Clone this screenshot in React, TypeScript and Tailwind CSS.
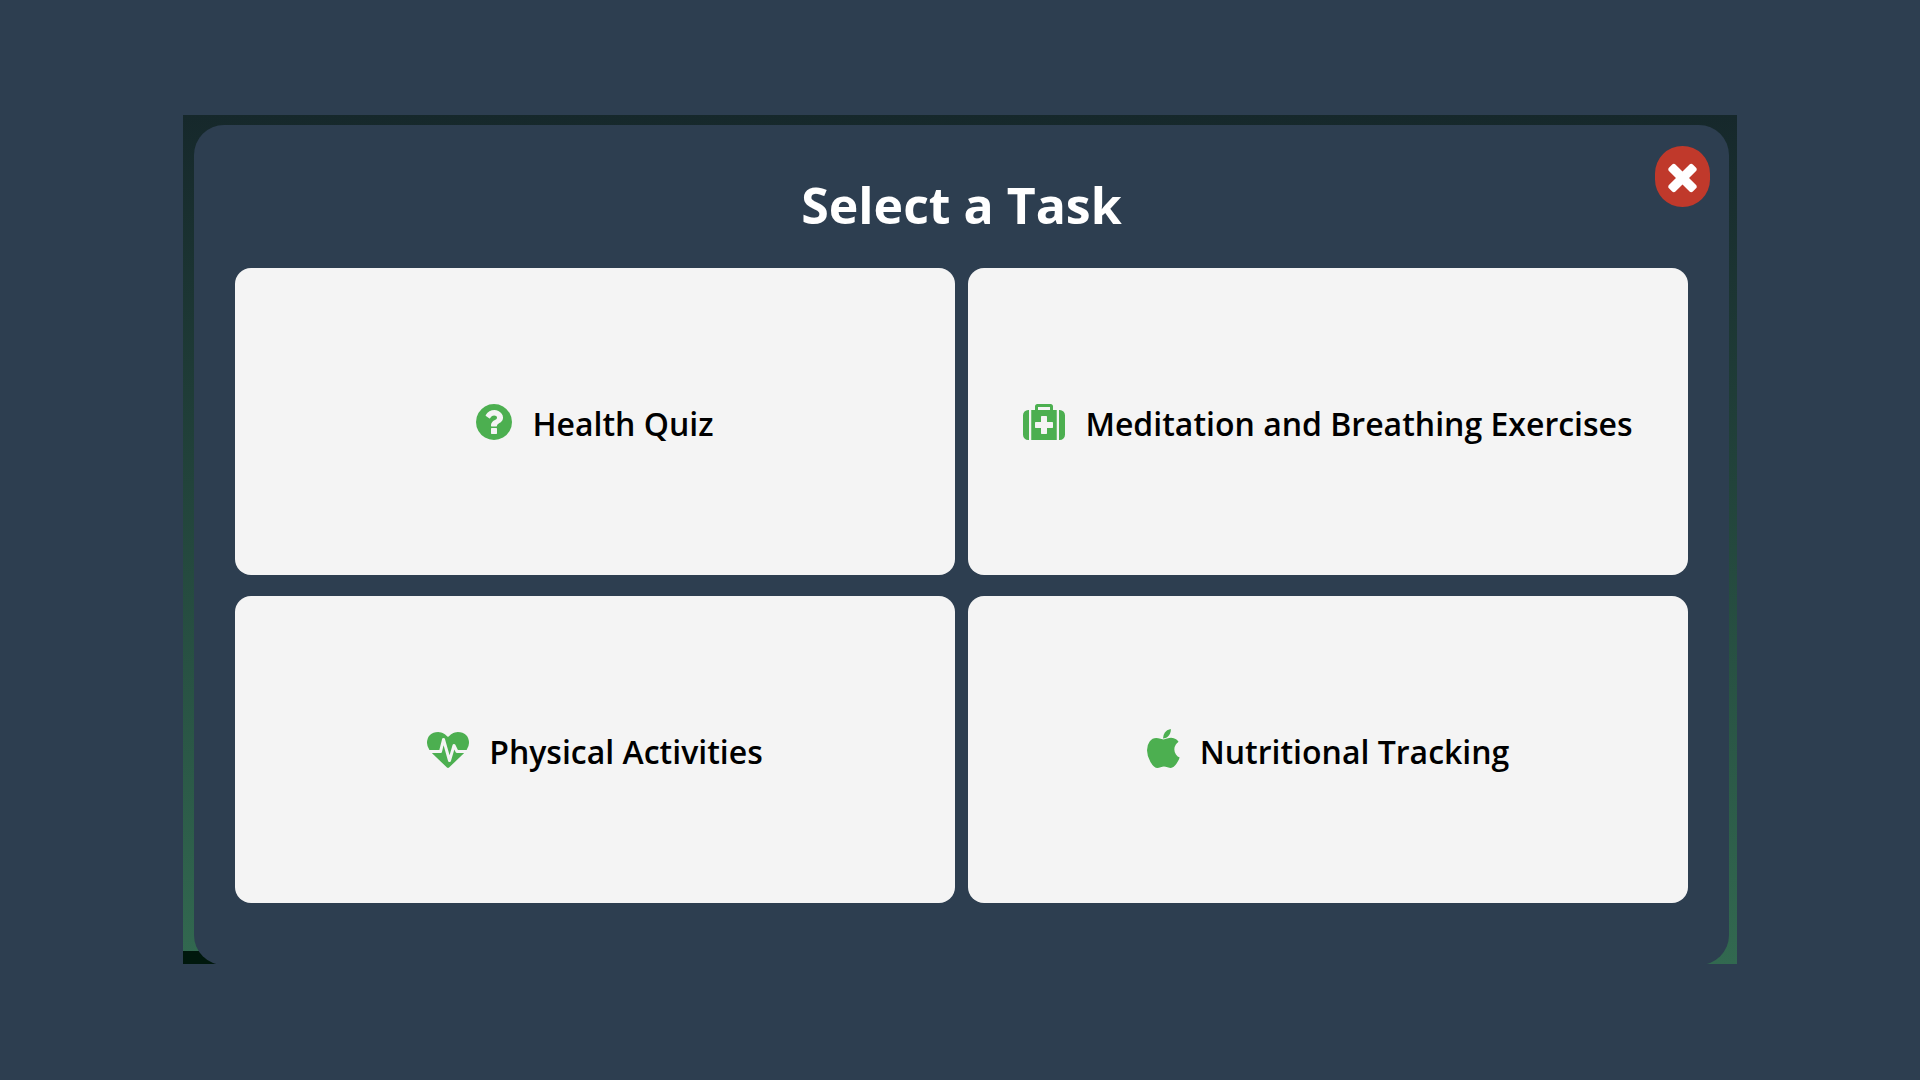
import type { ReactNode } from "react";

type IconProps = { viewBox: string; className: string; d: string };

function Icon({ viewBox, className, d }: IconProps) {
  return (
    <svg viewBox={viewBox} className={className} fill="currentColor" aria-hidden="true">
      <path d={d} />
    </svg>
  );
}

const QUESTION =
  "M1024 1376v-192q0-14-9-23t-23-9h-192q-14 0-23 9t-9 23v192q0 14 9 23t23 9h192q14 0 23-9t9-23zm256-672q0-88-55.5-163t-138.5-116-170-41q-243 0-371 213-15 24 8 42l132 100q7 6 19 6 16 0 25-12 53-68 86-92 34-24 86-24 48 0 85.5 26t37.5 59q0 38-20 61t-68 45q-63 28-115.5 86.5t-52.5 125.5v36q0 14 9 23t23 9h192q14 0 23-9t9-23q0-19 21.5-49.5t54.5-49.5q32-18 49-28.5t46-35 44.5-48 28-60.5 12.5-81zm384 192q0 209-103 385.5t-279.5 279.5-385.5 103-385.5-103-279.5-279.5-103-385.5 103-385.5 279.5-279.5 385.5-103 385.5 103 279.5 279.5 103 385.5z";
const MEDKIT =
  "M1280 1120v-192q0-14-9-23t-23-9h-224v-224q0-14-9-23t-23-9h-192q-14 0-23 9t-9 23v224h-224q-14 0-23 9t-9 23v192q0 14 9 23t23 9h224v224q0 14 9 23t23 9h192q14 0 23-9t9-23v-224h224q14 0 23-9t9-23zM640 384h512v-128h-512v128zM256 384v1280h-32q-92 0-158-66t-66-158v-832q0-92 66-158t158-66h32zM1440 384v1280h-1088v-1280h160v-160q0-40 28-68t68-28h576q40 0 68 28t28 68v160h160zM1792 608v832q0 92-66 158t-158 66h-32v-1280h32q92 0 158 66t66 158z";
const HEARTBEAT =
  "M1280 1024h305q-5 6-10 10.5t-9 7.5l-3 4-623 600q-18 18-44 18t-44-18l-624-602q-5-2-21-20h369q22 0 39.5-13.5t22.5-34.5l70-281 190 667q6 20 23 33t39 13q21 0 38-13t23-33l146-485 56 112q18 35 57 35zm512-428q0 145-103 300h-369l-111-221q-8-17-25.5-27t-36.5-8q-45 5-56 46l-129 430-196-686q-6-20-23.5-33t-39.5-13-39 13.5-22 34.5l-116 464h-423q-103-155-103-300 0-220 127-344t351-124q62 0 126.5 21.5t120 58 95.5 68.5 76 68q36-36 76-68t95.5-68.5 120-58 126.5-21.5q224 0 351 124t127 344z";
const APPLE =
  "M1585 1215q-39 125-123 250-129 196-257 196-49 0-140-32-86-32-151-32-61 0-142 33-81 34-132 34-152 0-301-259-147-261-147-503 0-228 113-374 113-144 284-144 72 0 177 30 104 30 138 30 45 0 143-34 102-34 173-34 119 0 213 65 52 36 104 100-79 67-114 118-65 94-65 207 0 124 69 223t158 126zm-376-1173q0 61-29 136-30 75-93 138-54 54-108 72-37 11-104 17 3-149 78-257 74-107 250-148 1 3 2.5 11t2.5 11q0 4 .5 10t.5 10z";
const TIMES =
  "M1490 1322q0 40-28 68l-136 136q-28 28-68 28t-68-28l-294-294-294 294q-28 28-68 28t-68-28l-136-136q-28-28-28-68t28-68l294-294-294-294q-28-28-28-68t28-68l136-136q28-28 68-28t68 28l294 294 294-294q28-28 68-28t68 28l136 136q28 28 28 68t-28 68l-294 294 294 294q28 28 28 68z";

const tasks: { label: string; icon: ReactNode }[] = [
  { label: "Health Quiz", icon: <Icon viewBox="128 0 1536 1792" className="h-[42px] w-9 shrink-0 text-[#4caf50]" d={QUESTION} /> },
  { label: "Meditation and Breathing Exercises", icon: <Icon viewBox="0 0 1792 1792" className="h-[42px] w-[42px] shrink-0 text-[#4caf50]" d={MEDKIT} /> },
  { label: "Physical Activities", icon: <Icon viewBox="0 0 1792 1792" className="h-[42px] w-[42px] shrink-0 text-[#4caf50]" d={HEARTBEAT} /> },
  { label: "Nutritional Tracking", icon: <Icon viewBox="192 0 1408 1792" className="h-[42px] w-[33px] shrink-0 text-[#4caf50]" d={APPLE} /> },
];

export default function App() {
  return (
    <main className="min-h-screen bg-[#2d3e50] px-[183px] py-[115px] font-['Open_Sans','Noto_Sans',sans-serif]">
      <div className="relative overflow-hidden bg-linear-to-b from-[#16282b] to-[#326950] pt-[10px] pr-2 pl-[11px]">
        <div className="absolute bottom-0 left-0 h-[13px] w-10 bg-[#00180d]" />
        <section className="relative -mb-px rounded-[30px] bg-[#2d3e50] px-[41px] pt-[48px] pb-[62px]">
          <button
            type="button"
            aria-label="Close"
            className="absolute top-[21px] right-[19px] flex h-[61px] w-[55px] items-center justify-center rounded-full bg-[#c0392b] text-white"
          >
            <Icon viewBox="0 0 1792 1792" className="h-[43px] w-[43px]" d={TIMES} />
          </button>
          <h1 className="mb-[31px] text-center text-[50px] leading-[64px] font-bold text-white">Select a Task</h1>
          <div className="grid grid-cols-2 gap-x-[13px] gap-y-[21px]">
            {tasks.map((task) => (
              <button
                key={task.label}
                type="button"
                className="flex min-h-[307px] items-center justify-center gap-5 rounded-2xl bg-[#f4f4f4] text-[32px] leading-[44px] font-semibold text-black"
              >
                {task.icon}
                <span className="pt-1">{task.label}</span>
              </button>
            ))}
          </div>
        </section>
      </div>
    </main>
  );
}
